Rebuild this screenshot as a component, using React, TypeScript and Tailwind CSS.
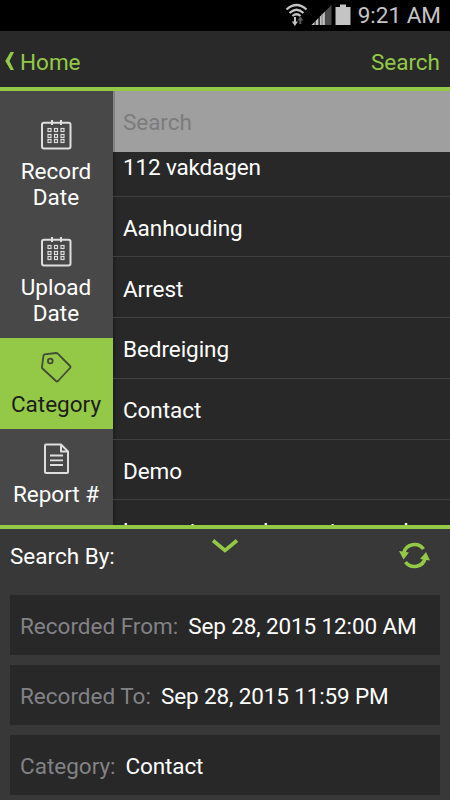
import React from 'react';

const categories = ['Aanhouding', 'Arrest', 'Bedreiging', 'Contact', 'Demo'];

const CalendarIcon: React.FC = () => (
  <svg width="32" height="32" viewBox="0 0 32 32" fill="none" stroke="#dedede">
    <rect x="2" y="3.7" width="28.5" height="25.8" rx="2" strokeWidth="2" />
    <path d="M12 1v5M21 1v5" strokeWidth="2" />
    {[9.5, 15.5, 20.5].map((y) =>
      [8, 14.5, 21].map((x) => (
        <rect key={`${x}-${y}`} x={x} y={y} width="3" height="3" strokeWidth="1.15" />
      ))
    )}
  </svg>
);

const TagIcon: React.FC = () => (
  <svg width="32" height="32" viewBox="0 0 32 32" fill="none" stroke="#424b35" strokeWidth="1.8" strokeLinejoin="round">
    <path d="M4.5 2.3L16 1Q17 0.9 18 1.8L30 14Q31 15 30 16L18 29Q17 30 16 29L2.5 16.5Q1.8 16 2 15L3.5 3.3Z" />
    <circle cx="10.3" cy="9" r="2.4" />
  </svg>
);

const DocumentIcon: React.FC = () => (
  <svg width="32" height="32" viewBox="0 0 32 32" fill="none" stroke="#dedede" strokeWidth="2" strokeLinejoin="round">
    <path d="M6 1.5H21L28 8.5V29Q28 30 27 30H6Q5 30 5 29V2.5Q5 1.5 6 1.5Z" />
    <path d="M21 1.5V8.5H28" />
    <path d="M10 12.5H23M10 17.3H23M10 22H23" strokeWidth="1.8" />
  </svg>
);

const StatusIcons: React.FC = () => (
  <svg width="68" height="31" viewBox="0 0 68 31" fill="none">
    <path d="M1.5 9.5Q11.5 0.5 21.5 9.5M4.5 13Q11.5 6.5 18.5 13M7.5 16Q11.5 12.5 15.5 16" stroke="#c4c4c4" strokeWidth="2.3" />
    <path d="M10 17v6" stroke="#c4c4c4" strokeWidth="2" />
    <path d="M6.8 21.5h6.2L9.9 26Z" fill="#c4c4c4" />
    <path d="M15.3 18v6" stroke="#5c5c5c" strokeWidth="2" />
    <path d="M12.3 20.5L15.3 16.2L18.3 20.5Z" fill="#5c5c5c" />
    <path d="M26.5 25L46.5 5V25Z" fill="#4b4b4b" />
    <path d="M26.5 25L29.5 22V25ZM30.8 20.7L33.3 18.2V25H30.8ZM34.8 16.7L39.8 11.7V25H34.8Z" fill="#c4c4c4" />
    <path d="M34.3 17V25" stroke="#292929" />
    <path d="M37.1 14V25" stroke="#777" />
    <path d="M55 4.5H61V7H65.5V25H50.5V7H55Z" fill="#c4c4c4" />
  </svg>
);

interface TabProps {
  icon: React.ReactNode;
  label: string;
  active?: boolean;
}

const Tab: React.FC<TabProps> = ({ icon, label, active }) => (
  <div
    className={`flex shrink-0 flex-col items-center pt-[14px] pr-px pb-[12px] text-center leading-[26px] ${
      active ? 'bg-[#93c947] text-[#1c1c1c]' : 'text-white'
    }`}
  >
    {icon}
    <span className="mt-[6.6px] w-[106px]">{label}</span>
  </div>
);

interface FieldProps {
  label: string;
  value: string;
}

const Field: React.FC<FieldProps> = ({ label, value }) => (
  <div className="flex h-[60px] items-center gap-[10px] bg-[#282828] px-[10px] pt-[2px]">
    <span className="text-[#828286]">{label}</span>
    <span className="tracking-[-0.13px] text-white">{value}</span>
  </div>
);

const App: React.FC = () => {
  return (
    <div className="flex h-[800px] w-[450px] flex-col overflow-hidden bg-[#383838] font-[Roboto,sans-serif] text-[22.5px] leading-[26px] whitespace-nowrap">
      <div className="flex h-[31px] shrink-0 items-center justify-end gap-[5px] bg-black pr-[9px] text-[#c4c4c4]">
        <StatusIcons />
        <span className="pb-px">9:21 AM</span>
      </div>

      <header className="flex h-[60px] shrink-0 items-center justify-between border-b-4 border-[#93c947] bg-[#292929] pt-[6px] pr-[10px] pl-[5px] text-[#93c947]">
        <div className="flex items-center gap-[6px]">
          <svg width="9" height="18" viewBox="0 0 9 18" className="mb-[3px]">
            <path d="M5.5 0H9L4.5 9L9 18H5.5L0.3 9Z" fill="#93c947" />
          </svg>
          <span>Home</span>
        </div>
        <span>Search</span>
      </header>

      <main className="flex h-[438px] shrink-0 overflow-hidden border-b-4 border-[#93c947]">
        <nav className="flex w-[113px] shrink-0 flex-col bg-[#484848] pt-[14px] whitespace-normal">
          <Tab icon={<CalendarIcon />} label="Record Date" />
          <Tab icon={<CalendarIcon />} label="Upload Date" />
          <Tab icon={<TagIcon />} label="Category" active />
          <Tab icon={<DocumentIcon />} label="Report #" />
        </nav>
        <section className="flex-1 overflow-hidden bg-[#282828] tracking-[-0.06px] text-white shadow-[inset_3px_0_3px_-1px_#00000040]">
          <div className="flex h-[60.5px] items-center border-l-2 border-[#838383] bg-[#9f9f9f] pt-px pl-2 text-[#7c7c7c]">Search</div>
          <div className="flex h-[45px] items-start border-b border-[#404040] pt-[2px] pl-[10px] tracking-[-0.16px]">112 vakdagen</div>
          {categories.map((name) => (
            <div key={name} className="flex h-[60.8px] items-center border-b border-[#404040] pt-[3px] pl-[10px]">
              {name}
            </div>
          ))}
          <div className="flex h-[61px] items-center pt-px pl-[10px] tracking-[-0.13px]">longest name longest name lon</div>
        </section>
      </main>

      <section className="flex flex-col">
        <div className="grid h-[66px] grid-cols-3 pr-[20px] pl-[10px]">
          <span className="pt-[14px] text-white">Search By:</span>
          <svg width="28" height="16" viewBox="0 0 28 16" className="mt-[9px] ml-[61px]">
            <path d="M2 2.5L14 12.5L26 2.5" fill="none" stroke="#93c947" strokeWidth="3.6" />
          </svg>
          <svg width="31" height="27" viewBox="0 0 31 27" className="mt-[12.5px] justify-self-end">
            <path d="M4.8 11A11 10.7 0 0 1 24.5 7M26.2 16A11 10.7 0 0 1 6.5 20" fill="none" stroke="#93c947" strokeWidth="3.6" />
            <path d="M0 9L10 10.5L4.5 17.5ZM31 18.5L21 17L27 10Z" fill="#93c947" />
          </svg>
        </div>
        <div className="flex flex-col gap-[10px] px-[10px]">
          <Field label="Recorded From:" value="Sep 28, 2015 12:00 AM" />
          <Field label="Recorded To:" value="Sep 28, 2015 11:59 PM" />
          <Field label="Category:" value="Contact" />
        </div>
      </section>
    </div>
  );
};

export default App;
